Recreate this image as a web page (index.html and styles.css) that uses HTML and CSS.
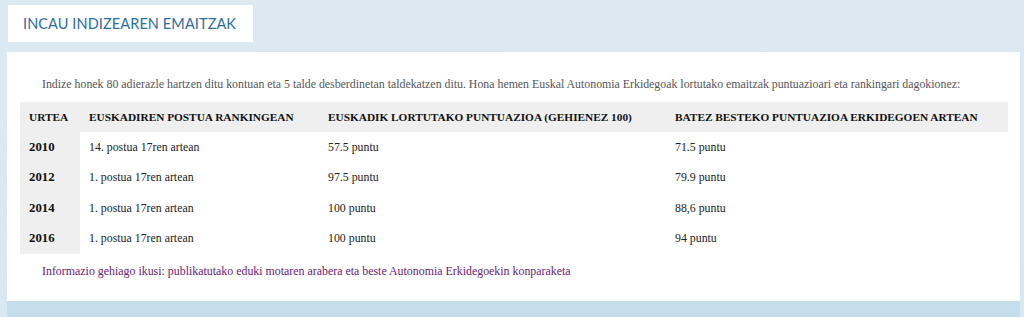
FILE: index.html
```html
<!DOCTYPE html>
<html lang="eu">
<head>
<meta charset="utf-8">
<title>INCAU indizearen emaitzak</title>
<link rel="stylesheet" href="styles.css">
</head>
<body>
<div class="page">
  <div class="title-box"><h2 class="title">INCAU INDIZEAREN EMAITZAK</h2></div>
  <div class="card">
    <p class="intro">Indize honek 80 adierazle hartzen ditu kontuan eta 5 talde desberdinetan taldekatzen ditu. Hona hemen Euskal Autonomia Erkidegoak lortutako emaitzak puntuazioari eta rankingari dagokionez:</p>
    <table class="results">
      <thead>
        <tr>
          <th class="c1">URTEA</th>
          <th class="c2">EUSKADIREN POSTUA RANKINGEAN</th>
          <th class="c3">EUSKADIK LORTUTAKO PUNTUAZIOA (GEHIENEZ 100)</th>
          <th class="c4">BATEZ BESTEKO PUNTUAZIOA ERKIDEGOEN ARTEAN</th>
        </tr>
      </thead>
      <tbody>
        <tr><th>2010</th><td>14. postua 17ren artean</td><td>57.5 puntu</td><td>71.5 puntu</td></tr>
        <tr><th>2012</th><td>1. postua 17ren artean</td><td>97.5 puntu</td><td>79.9 puntu</td></tr>
        <tr><th>2014</th><td>1. postua 17ren artean</td><td>100 puntu</td><td>88,6 puntu</td></tr>
        <tr><th>2016</th><td>1. postua 17ren artean</td><td>100 puntu</td><td>94 puntu</td></tr>
      </tbody>
    </table>
    <p class="more"><a href="#">Informazio gehiago ikusi: publikatutako eduki motaren arabera eta beste Autonomia Erkidegoekin konparaketa</a></p>
  </div>
</div>
<div class="bottom-band"></div>
</body>
</html>
```
FILE: styles.css
```css
html, body {
  margin: 0;
  padding: 0;
}
body {
  background: linear-gradient(180deg, #dde9f2 0%, #d9e8f1 100%);
  font-family: "Liberation Serif", "DejaVu Serif", serif;
  height: 317px;
  overflow: hidden;
}
.page {
  padding: 5px 4px 0 7px;
}
.title-box {
  display: inline-block;
  background: #ffffff;
  padding: 0 17px 0 15px;
  height: 37px;
  box-sizing: border-box;
  margin-left: 1px;
}
.title {
  margin: 0;
  font-family: "Lato", "Open Sans", sans-serif;
  font-weight: 400;
  font-size: 14.5px;
  line-height: 37px;
  color: #2c6f99;
  letter-spacing: 0.1px;
}
.card {
  margin-top: 10px;
  background: #ffffff;
  height: 249px;
  box-sizing: border-box;
  padding: 25px 12px 0 13px;
}
.intro {
  margin: 0 0 11px 22px;
  font-size: 11.85px;
  line-height: 14px;
  color: #555555;
}
.results {
  width: 988px;
  border-collapse: collapse;
  font-size: 11.85px;
  color: #222222;
}
.results th, .results td {
  text-align: left;
  padding: 0 9px;
  height: 30.5px;
  vertical-align: middle;
}
.results thead th {
  background: #efefef;
  font-weight: 700;
  font-size: 11.3px;
  height: 30px;
  color: #111111;
}
.results tbody th {
  background: #efefef;
  font-weight: 700;
  font-size: 12.8px;
  color: #111111;
}
.c1 { width: 42px; }
.c2 { width: 221px; }
.c3 { width: 329px; }
.more {
  margin: 10px 0 0 22px;
  font-size: 11.9px;
  line-height: 14px;
}
.more a {
  color: #6b2171;
  text-decoration: none;
}
.bottom-band {
  position: absolute;
  left: 7px;
  right: 4px;
  top: 301px;
  height: 16px;
  background: #c5deeb;
}
```
